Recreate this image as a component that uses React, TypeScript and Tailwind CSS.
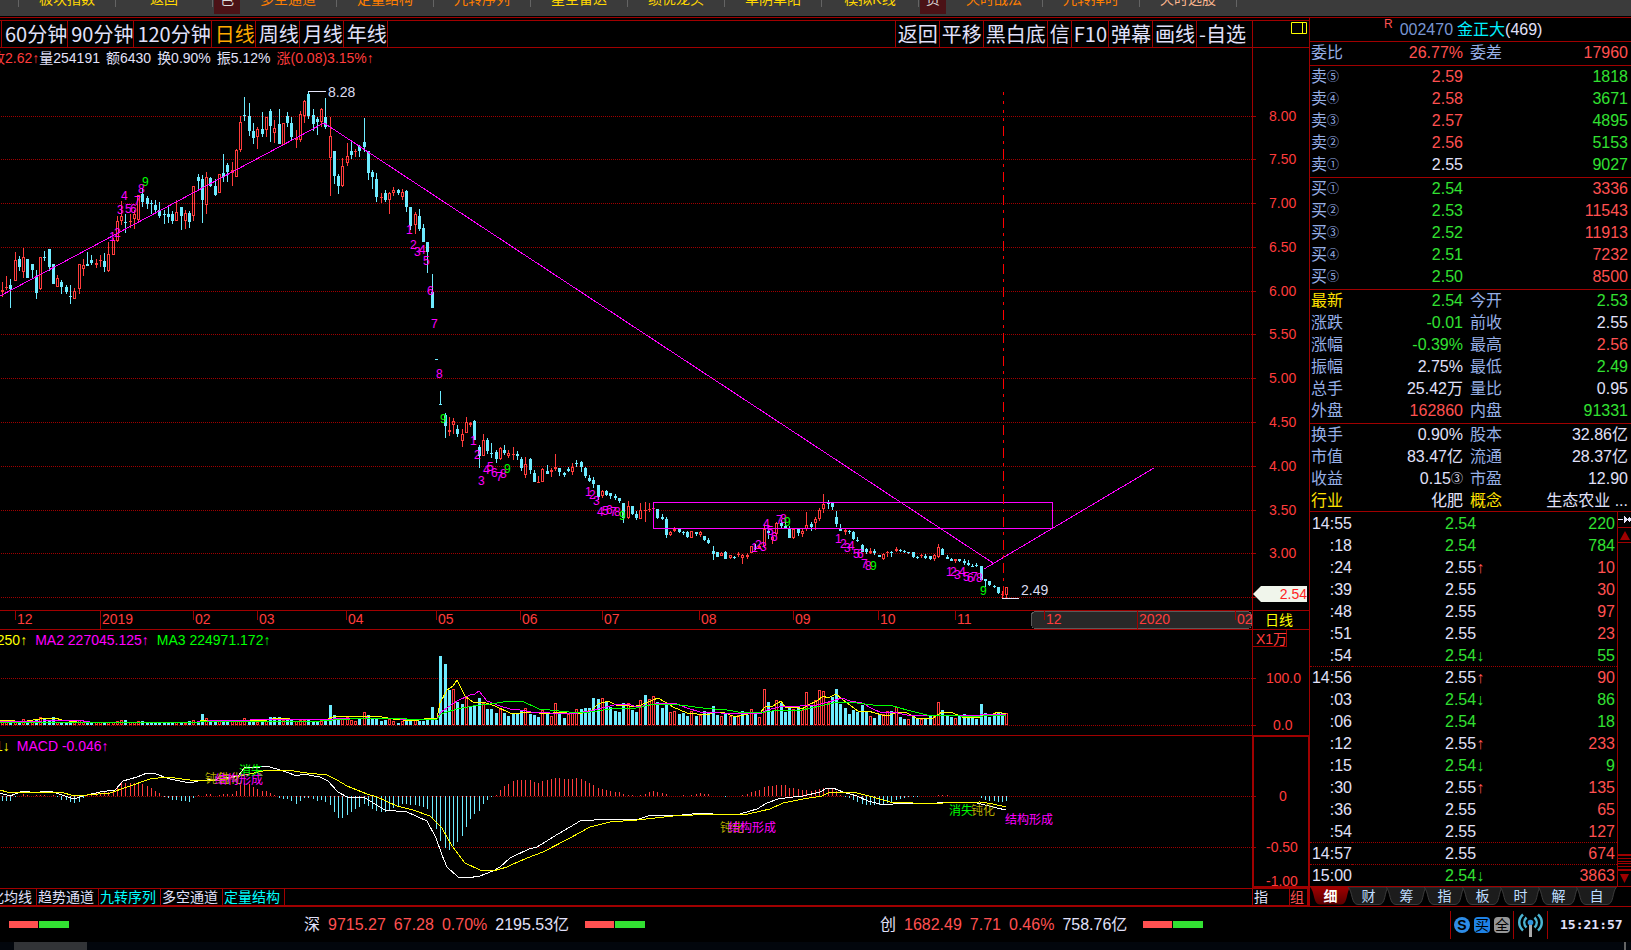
import React from "react";

type Candle = [string, number, number, number, number];
type Pt = [number, number];

const UP = "#ff3c3c";
const DOWN = "#6eebff";
const GRID = "#a00000";

// Daily bars: kind, high, body top, body bottom, low. Values are thirds of a pixel below `base`.
const segments: { base: number; rows: Candle[] }[] = [
  {
    base: 80,
    rows: [
      ["r", 606, 630, 636, 651], ["r", 588, 622, 622, 630], ["c", 597, 615, 627, 684], ["r", 516, 541, 603, 603],
      ["c", 528, 537, 561, 573], ["r", 504, 531, 577, 594], ["c", 537, 537, 594, 594], ["c", 552, 552, 570, 597],
      ["c", 570, 588, 640, 657], ["r", 531, 531, 627, 630], ["c", 513, 531, 534, 543], ["c", 507, 507, 561, 573],
      ["c", 552, 552, 612, 612], ["r", 585, 594, 621, 621], ["c", 600, 606, 621, 642], ["c", 615, 621, 636, 642],
      ["c", 615, 648, 648, 672], ["r", 624, 633, 657, 657], ["r", 552, 552, 627, 642], ["r", 537, 555, 567, 588],
      ["c", 516, 552, 558, 558], ["c", 525, 540, 549, 555], ["r", 537, 549, 557, 564], ["r", 525, 541, 541, 561],
      ["c", 519, 543, 561, 576], ["r", 486, 522, 573, 576], ["r", 474, 480, 527, 527], ["r", 408, 423, 483, 486],
      ["r", 363, 408, 423, 435], ["c", 402, 426, 429, 459], ["r", 402, 424, 424, 444], ["r", 390, 402, 417, 447],
      ["r", 345, 345, 420, 423], ["c", 324, 342, 366, 381], ["c", 348, 354, 372, 387], ["c", 360, 369, 372, 402],
      ["c", 360, 375, 390, 396], ["c", 366, 390, 408, 414], ["c", 390, 402, 405, 432], ["c", 378, 402, 411, 429],
      ["c", 393, 402, 423, 432], ["r", 360, 396, 423, 423], ["c", 381, 381, 408, 450], ["r", 390, 399, 423, 447],
      ["c", 393, 399, 426, 444], ["r", 318, 318, 408, 423], ["c", 282, 291, 303, 330], ["c", 285, 297, 360, 429],
      ["r", 276, 291, 375, 402], ["c", 291, 294, 318, 321], ["c", 297, 318, 345, 348], ["r", 282, 282, 339, 339],
      ["c", 222, 279, 291, 306], ["c", 249, 255, 276, 306], ["r", 246, 270, 279, 318], ["r", 207, 210, 291, 291],
      ["r", 108, 126, 210, 216], ["c", 51, 105, 108, 123], ["c", 69, 108, 153, 168], ["c", 129, 153, 174, 192],
      ["r", 141, 147, 171, 207], ["c", 96, 147, 162, 171], ["r", 111, 111, 150, 171], ["c", 87, 93, 138, 186],
      ["r", 120, 144, 159, 189], ["c", 87, 132, 192, 192], ["r", 129, 129, 195, 195], ["c", 96, 108, 129, 141],
      ["c", 111, 129, 171, 180], ["r", 150, 174, 180, 204], ["r", 93, 102, 180, 186], ["r", 60, 63, 108, 129],
      ["c", 35, 42, 108, 117], ["c", 87, 105, 132, 153], ["c", 111, 117, 126, 165], ["r", 84, 87, 126, 141],
      ["c", 54, 111, 141, 147], ["r", 111, 168, 234, 348], ["c", 213, 213, 288, 312], ["c", 282, 288, 318, 342],
      ["r", 234, 258, 318, 321], ["r", 189, 228, 249, 258], ["c", 180, 213, 225, 237], ["r", 207, 213, 213, 231],
      ["c", 195, 198, 213, 231], ["c", 114, 186, 201, 216], ["c", 213, 213, 279, 300], ["c", 270, 276, 291, 327],
      ["c", 279, 297, 351, 366], ["r", 339, 351, 351, 369], ["c", 330, 339, 360, 366], ["r", 336, 339, 360, 402],
      ["r", 321, 330, 339, 348], ["c", 327, 330, 339, 345], ["r", 327, 336, 351, 360], ["c", 330, 333, 381, 396],
      ["c", 381, 381, 438, 450], ["r", 396, 402, 435, 462], ["c", 387, 408, 447, 453], ["c", 432, 444, 486, 486],
      ["c", 486, 486, 516, 579], ["c", 582, 636, 684, 684],
    ],
  },
  {
    base: 300,
    rows: [
      ["c", 178, 178, 178, 178], ["c", 273, 313, 313, 315], ["c", 339, 345, 378, 414], ["r", 351, 390, 396, 408],
      ["r", 354, 363, 375, 402], ["c", 375, 387, 402, 411], ["r", 387, 402, 423, 441], ["r", 351, 366, 399, 399],
      ["r", 366, 369, 375, 381], ["c", 360, 363, 420, 420], ["c", 435, 441, 468, 504], ["r", 402, 420, 468, 468],
      ["c", 414, 420, 453, 462], ["c", 429, 459, 462, 474], ["c", 450, 456, 477, 489], ["r", 441, 444, 477, 480],
      ["c", 435, 450, 459, 465], ["r", 450, 459, 468, 474], ["r", 441, 462, 465, 480], ["c", 453, 462, 468, 480],
      ["c", 471, 477, 504, 513], ["r", 471, 492, 525, 534], ["c", 474, 477, 510, 522], ["c", 510, 519, 546, 546],
      ["r", 528, 548, 548, 548], ["r", 504, 507, 546, 546], ["c", 495, 513, 522, 522], ["r", 504, 510, 516, 531],
      ["r", 462, 501, 507, 513], ["c", 504, 504, 516, 528], ["c", 516, 519, 525, 531], ["c", 501, 507, 513, 516],
      ["r", 489, 501, 516, 525], ["c", 480, 489, 492, 501], ["c", 483, 486, 501, 516], ["c", 501, 504, 528, 534],
      ["c", 525, 534, 543, 546], ["c", 531, 540, 552, 564], ["c", 555, 555, 591, 600], ["r", 570, 573, 588, 594],
      ["c", 570, 573, 585, 588], ["c", 579, 579, 588, 597], ["c", 582, 588, 594, 600], ["c", 594, 594, 603, 609],
      ["c", 609, 609, 654, 669], ["r", 603, 618, 654, 657], ["c", 618, 618, 642, 645], ["c", 633, 642, 654, 660],
      ["r", 609, 630, 657, 657], ["r", 606, 630, 633, 666], ["r", 609, 627, 630, 636],
    ],
  },
  {
    base: 480,
    rows: [
      ["r", 84, 86, 86, 88], ["c", 87, 87, 114, 117], ["c", 102, 111, 117, 120], ["c", 111, 117, 165, 174],
      ["r", 153, 156, 165, 168], ["r", 141, 147, 153, 156], ["c", 147, 147, 156, 159], ["c", 153, 156, 159, 165],
      ["c", 153, 156, 171, 174], ["r", 153, 153, 174, 174], ["c", 156, 156, 162, 168], ["r", 153, 156, 165, 171],
      ["c", 168, 168, 180, 183], ["c", 174, 180, 189, 192], ["c", 198, 213, 222, 240], ["c", 216, 216, 231, 231],
      ["r", 216, 219, 228, 228], ["c", 213, 216, 237, 237], ["r", 225, 225, 234, 237], ["c", 228, 231, 234, 237],
      ["r", 216, 222, 225, 231], ["r", 222, 225, 234, 252], ["r", 219, 225, 231, 237], ["r", 198, 198, 219, 219],
      ["c", 192, 204, 207, 210], ["r", 192, 198, 204, 207], ["r", 132, 147, 198, 204], ["c", 147, 153, 159, 177],
      ["r", 168, 171, 180, 192], ["r", 126, 129, 162, 168], ["c", 120, 129, 138, 144], ["c", 126, 138, 144, 147],
      ["c", 138, 147, 174, 174], ["r", 147, 147, 174, 177], ["c", 147, 147, 159, 168], ["r", 147, 153, 162, 171],
      ["r", 96, 135, 147, 153], ["c", 126, 132, 141, 153], ["r", 111, 117, 129, 150], ["r", 84, 90, 117, 123],
      ["r", 42, 72, 87, 99], ["c", 60, 69, 72, 87], ["c", 66, 69, 81, 90], ["c", 93, 111, 132, 141],
      ["c", 132, 144, 153, 153], ["r", 147, 150, 156, 165], ["c", 150, 153, 156, 162], ["c", 153, 156, 177, 180],
      ["c", 171, 180, 183, 186], ["c", 192, 195, 216, 216], ["c", 204, 207, 216, 222], ["r", 204, 213, 219, 222],
      ["c", 207, 213, 219, 225], ["c", 225, 225, 231, 231], ["r", 219, 222, 237, 240], ["r", 213, 216, 219, 231],
      ["c", 213, 216, 219, 231], ["r", 201, 207, 213, 216], ["c", 207, 210, 213, 216], ["c", 210, 213, 216, 219],
      ["c", 216, 216, 219, 222], ["c", 216, 216, 231, 234], ["c", 228, 231, 234, 237], ["r", 222, 225, 228, 234],
      ["c", 222, 228, 234, 237], ["c", 228, 228, 237, 240], ["r", 222, 225, 237, 243], ["r", 192, 201, 231, 234],
      ["c", 204, 207, 225, 225], ["c", 225, 231, 237, 237], ["c", 234, 237, 243, 243], ["r", 237, 237, 243, 249],
      ["c", 237, 237, 243, 246], ["c", 237, 243, 249, 255], ["c", 240, 249, 255, 258], ["c", 252, 258, 261, 261],
      ["c", 249, 255, 258, 261], ["c", 258, 258, 300, 300], ["c", 297, 297, 303, 321], ["c", 303, 303, 315, 318],
      ["c", 315, 318, 321, 324], ["c", 321, 321, 339, 342], ["r", 333, 342, 345, 354], ["r", 321, 321, 345, 354],
    ],
  },
];

const candles = segments.flatMap((s) =>
  s.rows.map(([k, ...v]) => ({ k, v: v.map((n) => s.base + Math.floor(n / 3)) })),
);

const barX = (i: number) => Math.floor(2.4 + 4.2558 * i);

// Volume bar heights; negative marks a rising day.
const volume = [
  -3, -3, 2, -3, 3, -6, 4, -3, 6, -8, 6, 4, 8, -3, 3, 2, 2, -4, -5, -3, 3, 3, -3, -3, 3, -3, -3, -4, -5, 5, -3, -3,
  -4, 4, 3, 3, 3, 3, 2, 2, 2, -3, 2, -2, 4, -5, 4, 11, -7, 4, 4, -4, 5, 4, -4, -5, -5, -7, 4, 4, -3, 6, -4, 8, 8, 8,
  -5, 5, 5, -4, -5, -5, 5, 4, 3, -4, 4, 20, 10, 6, -7, -8, -5, -4, 6, -13, 10, 7, 7, 4, 5, -6, -4, 2, -4, 6, 4, -5,
  4, 4, 5, 18, 5, 69, 61, 35, -36, 23, 21, -27, 19, 20, 27, -22, 16, 16, 12, -16, 12, 9, 12, 12, 14, -17, 11, 10, 8,
  -15, 13, -9, -22, 11, 7, -11, -12, -16, 16, 17, 17, 27, 26, -27, 24, 18, 14, 13, 22, -22, 15, 13, -25, 30, -26,
  -29, 23, 17, 20, -13, -14, 11, 12, 9, -14, 9, -10, 14, 12, 19, 10, -9, 12, -9, 9, -10, 14, 10, -16, 12, -8, -36,
  23, 14, -25, 22, 13, 19, -16, 18, -15, -33, 19, -25, -35, -34, -23, 28, 36, 21, 17, 11, 15, 13, 20, 13, -9, 7, 10,
  -11, -14, 14, -18, 8, 6, -6, 9, 7, -6, 6, 9, -10, -23, 15, 9, 8, -7, 9, 11, 8, 7, 6, 21, 12, 8, 10, 13, 12, -12,
];

const macd = [
  -5, -5, -5, -1, 0, 2, 1, 0, 1, 1, 1, 0, 1, -1, -4, -4, -6, -7, -6, -2, 1, 2, 3, 3, 4, 4, 6, 9, 14, 13, 13, 13, 14,
  12, 10, 8, 5, 3, -1, -2, -4, -4, -5, -5, -6, -2, 1, 0, 2, 2, 0, 1, 2, 2, 2, 5, 11, 13, 12, 9, 7, 5, 5, 3, 1, -2,
  -3, -3, -5, -8, -5, -2, -2, -3, -5, -4, -6, -9, -16, -22, -22, -19, -16, -13, -11, -8, -10, -13, -15, -16, -16,
  -14, -12, -10, -8, -8, -9, -9, -10, -11, -13, -22, -33, -45, -52, -54, -50, -46, -40, -31, -23, -18, -15, -8, -4,
  -1, 1, 6, 10, 12, 15, 16, 16, 16, 16, 14, 13, 15, 16, 17, 18, 18, 17, 17, 17, 18, 17, 15, 13, 11, 8, 7, 6, 5, 4,
  4, 2, 1, 1, 0, 1, 2, 4, 5, 4, 3, 2, 0, 0, 0, 1, 0, 1, 2, 3, 2, 2, 0, 0, 0, -1, 0, 0, 0, 1, 2, 4, 5, 6, 9, 10, 10,
  11, 11, 11, 8, 8, 7, 6, 6, 5, 6, 7, 8, 8, 8, 5, 1, -1, -2, -4, -6, -8, -9, -9, -9, -9, -8, -7, -6, -4, -3, -2, -1,
  -1, -1, 0, 0, 0, 0, 1, 1, 1, 0, 0, 0, 0, 0, 0, 0, -2, -4, -5, -5, -6, -6, -5,
];

const plot = (x0: number, y0: number, kx: number, pts: Pt[]) =>
  pts.map(([x, y]) => `${Math.round(x0 + x / kx)},${Math.round(y0 + y / 3)}`).join(" ") + " ";

const ma1 =
  plot(0, 600, 3, [[0, 364], [30, 361], [60, 366], [120, 357], [165, 355], [185, 361], [230, 367], [300, 367], [590, 366], [610, 360], [680, 359], [800, 361], [830, 355], [870, 356], [940, 360], [985, 358], [1000, 350], [1040, 347], [1080, 352], [1130, 349], [1180, 358], [1240, 364], [1290, 355], [1310, 353], [1321, 310], [1340, 270], [1358, 258], [1372, 241], [1395, 288], [1423, 309], [1450, 307], [1486, 318], [1530, 338], [1560, 338]]) +
  plot(420, 630, 2.529, [[265, 246], [300, 249], [330, 253], [345, 247], [400, 253], [435, 239], [450, 222], [475, 213], [495, 224], [520, 226], [535, 232], [560, 226], [602, 205]]) +
  plot(660, 640, 3, [[0, 178], [40, 200], [80, 220], [110, 223], [150, 222], [160, 217], [190, 217], [225, 230], [265, 222], [300, 218], [315, 200], [340, 198], [362, 184], [375, 200], [392, 204], [405, 200], [425, 208], [445, 195], [470, 182], [490, 169], [505, 174], [527, 162], [550, 180], [595, 212], [625, 212], [665, 226], [690, 224], [710, 215], [740, 220], [775, 236], [820, 235], [845, 217], [880, 218], [905, 230], [950, 233], [975, 224], [1000, 222], [1015, 216], [1037, 223]]);
const ma2 =
  plot(0, 600, 3, [[0, 365], [130, 364], [160, 360], [230, 361], [270, 367], [400, 367], [590, 366], [650, 361], [750, 361], [820, 357], [930, 358], [1000, 357], [1100, 355], [1200, 357], [1260, 361], [1310, 357], [1322, 335], [1370, 302], [1410, 284], [1425, 283], [1436, 273], [1462, 303], [1500, 318], [1530, 328], [1560, 329]]) +
  plot(420, 630, 2.529, [[280, 247], [330, 250], [400, 250], [440, 240], [490, 225], [525, 222], [550, 230], [595, 223]]) +
  plot(660, 640, 3, [[0, 190], [50, 193], [80, 203], [120, 217], [180, 220], [300, 221], [320, 210], [370, 199], [420, 197], [470, 195], [505, 186], [545, 174], [570, 182], [605, 190], [640, 208], [665, 218], [700, 217], [740, 225], [800, 226], [825, 229], [860, 225], [960, 225], [1037, 223]]);
const ma3 =
  plot(0, 600, 3, [[0, 367], [600, 367], [620, 364], [960, 362], [1000, 359], [1100, 354], [1200, 355], [1240, 360], [1310, 358], [1322, 342], [1370, 327], [1420, 317], [1470, 313], [1530, 304], [1560, 307]]) +
  plot(420, 630, 2.529, [[258, 214], [300, 237], [330, 240], [400, 249], [430, 245], [480, 236], [545, 235], [595, 223]]) +
  plot(660, 640, 3, [[0, 192], [60, 196], [130, 203], [200, 209], [235, 217], [290, 219], [360, 211], [425, 210], [480, 199], [530, 186], [590, 189], [640, 196], [700, 198], [740, 210], [800, 224], [900, 227], [970, 229], [1037, 224]]);
const dif =
  plot(0, 600, 3, [[0, 580], [30, 587], [70, 574], [110, 580], [130, 574], [150, 574], [185, 586], [222, 598], [250, 587], [300, 577], [345, 571], [370, 543], [410, 531], [440, 519], [460, 520], [510, 536], [570, 549], [595, 542], [650, 538], [715, 528], [735, 502], [780, 502], [800, 499], [850, 512], [890, 527], [910, 521], [960, 530], [985, 543], [1015, 577], [1040, 590], [1095, 593], [1155, 629], [1220, 636], [1280, 662], [1308, 715], [1325, 765], [1340, 802], [1375, 832], [1400, 834], [1440, 828], [1480, 812], [1500, 800], [1530, 773]]) +
  plot(420, 630, 2.529, [[232, 682], [275, 657], [295, 650], [350, 611], [380, 592], [405, 572], [440, 569], [510, 566], [545, 569], [585, 556], [640, 558], [710, 549], [770, 554], [802, 551]]) +
  plot(660, 640, 3, [[240, 521], [290, 508], [320, 490], [355, 477], [400, 470], [430, 468], [480, 456], [500, 445], [520, 445], [550, 457], [590, 469], [625, 484], [660, 492], [700, 492], [830, 490], [845, 485], [870, 487], [950, 488], [975, 495], [1010, 504], [1037, 509]]);
const dea =
  plot(0, 600, 3, [[0, 571], [20, 577], [180, 577], [225, 587], [330, 579], [390, 558], [450, 537], [500, 531], [570, 541], [660, 540], [735, 524], [800, 510], [860, 510], [920, 519], [980, 525], [1010, 540], [1040, 559], [1100, 582], [1130, 590], [1190, 617], [1240, 630], [1290, 648], [1325, 685], [1355, 738], [1395, 788], [1440, 809], [1480, 812], [1520, 800]]) +
  plot(420, 630, 2.529, [[230, 706], [270, 683], [310, 667], [380, 625], [430, 592], [480, 576], [550, 570], [640, 559], [740, 553], [800, 551]]) +
  plot(660, 640, 3, [[265, 521], [330, 507], [370, 490], [430, 477], [485, 467], [510, 457], [550, 455], [590, 460], [640, 472], [690, 486], [760, 490], [850, 488], [960, 487], [1000, 491], [1037, 500]]);

// Sequence counters 1 to 9: the place of each digit.
const runs: Pt[][] = [
  [[109, 236], [114, 232], [117, 209], [121, 195], [125, 208], [130, 208], [134, 200], [138, 188], [142, 181]],
  [[406, 229], [410, 244], [414, 251], [419, 249], [423, 260], [427, 290], [431, 323], [436, 373], [440, 418]],
  [[470, 440], [474, 454], [478, 480], [483, 469], [487, 466], [491, 472], [496, 476], [500, 473], [504, 468]],
  [[585, 491], [589, 494], [593, 500], [597, 511], [602, 510], [606, 509], [610, 511], [614, 511], [619, 515]],
  [[751, 547], [755, 544], [760, 546], [763, 523], [767, 530], [771, 536], [776, 519], [780, 518], [784, 521]],
  [[835, 538], [840, 543], [844, 547], [848, 545], [853, 553], [857, 553], [861, 563], [865, 565], [870, 565]],
  [[946, 571], [950, 571], [954, 574], [959, 571], [963, 576], [967, 577], [971, 576], [976, 577], [980, 590]],
];

const priceGrid: [number, string][] = [
  [116, "8.00"], [159, "7.50"], [203, "7.00"], [247, "6.50"], [291, "6.00"], [334, "5.50"],
  [378, "5.00"], [422, "4.50"], [466, "4.00"], [510, "3.50"], [553, "3.00"], [597, ""],
];

const months: [number, string, boolean][] = [
  [15, "12", false], [100, "2019", true], [193, "02", false], [257, "03", false], [346, "04", false],
  [436, "05", false], [520, "06", false], [602, "07", false], [699, "08", false], [793, "09", false],
  [878, "10", false], [955, "11", false], [1044, "12", false], [1137, "2020", true], [1235, "02", false],
];

const Dots = ({ y }: { y: number }) => (
  <line x1="1" x2="100%" y1={y + 0.5} y2={y + 0.5} stroke={GRID} strokeDasharray="1 1" />
);

function PriceChart() {
  return (
    <svg className="block h-[542px] w-full" shapeRendering="crispEdges" role="img" aria-label="日线K线图">
      <g transform="translate(0 -68)">
        {priceGrid.map(([y]) => <Dots key={y} y={y} />)}
        {candles.map(({ k, v: [h, t, b, l] }, i) => {
          const x = barX(i);
          const body = Math.max(1, b - t);
          return k === "c" ? (
            <g key={i} fill={DOWN}>
              <rect x={x} y={h} width="1" height={Math.max(1, l - h)} />
              <rect x={x - 1} y={t} width="3" height={body} />
            </g>
          ) : (
            <g key={i} fill={UP}>
              <rect x={x} y={h} width="1" height={t - h} />
              <rect x={x} y={b} width="1" height={Math.max(0, l - b)} />
              {body < 3 ? (
                <rect x={x - 1} y={t} width="3" height={body} />
              ) : (
                <rect x={x - 0.5} y={t + 0.5} width="2" height={body - 1} fill="none" stroke={UP} />
              )}
            </g>
          );
        })}
        <g fill="none" stroke="#ff00ff">
          <polyline points="0,296 324,123 993,563" />
          <line x1="984" y1="569" x2="1154" y2="468" />
          <rect x="653.5" y="502.5" width="399" height="26" />
        </g>
        <path d="M1003.5 92v3M1003.5 101v3" stroke="#ff0000" />
        <line x1="1003.5" x2="1003.5" y1="110" y2="598" stroke="#ff0000" strokeDasharray="10 5 3 5" strokeDashoffset="7" />
        <path d="M308 91.5h18M1002 598.5h17" stroke="#e6e6fa" />
        <g className="text-sm" fill="#dcdcf0">
          <text x="328" y="97">8.28</text>
          <text x="1021" y="595">2.49</text>
        </g>
        <g className="text-xs">
          {runs.map((r, i) =>
            r.map(([x, y], j) => (
              <text key={`${i}-${j}`} x={x} y={y + 5} fill={j === 8 ? "#00ff00" : "#ff00ff"}>{j + 1}</text>
            )),
          )}
        </g>
      </g>
    </svg>
  );
}

function VolumeChart() {
  return (
    <svg className="block h-[85px] w-full" shapeRendering="crispEdges" role="img" aria-label="成交量">
      <g transform="translate(0 -650)">
        <Dots y={678} />
        <Dots y={725} />
        {volume.map((v, i) =>
          v >= 0 ? (
            <rect key={i} x={barX(i) - 1} y={725 - v} width="3" height={v} fill={DOWN} />
          ) : (
            <rect key={i} x={barX(i) - 0.5} y={725.5 + v} width="2" height={-v - 1} fill="none" stroke={UP} />
          ),
        )}
        <polyline points={ma1} fill="none" stroke="#ffff00" />
        <polyline points={ma2} fill="none" stroke="#ff00ff" />
        <polyline points={ma3} fill="none" stroke="#00ff00" />
      </g>
    </svg>
  );
}

function MacdChart() {
  return (
    <svg className="block h-[132px] w-full" shapeRendering="crispEdges" role="img" aria-label="MACD">
      <g transform="translate(0 -756)">
        <Dots y={796} />
        <Dots y={847} />
        {macd.map((v, i) => (
          <rect key={i} x={barX(i)} y={v > 0 ? 796 - v : 796} width="1" height={Math.abs(v)} fill={v > 0 ? UP : DOWN} />
        ))}
        <polyline points={dif} fill="none" stroke="#ffffff" />
        <polyline points={dea} fill="none" stroke="#ffff00" />
        <g className="text-xs" fill="#b4aa00">
          <text x="205" y="783">钝化</text>
          <text x="218" y="783">钝化</text>
          <text x="215" y="784" fill="#ff00ff">结构形成</text>
          <text x="239" y="775" fill="#00ff00">消失</text>
          <text x="720" y="832">钝化</text>
          <text x="728" y="832" fill="#ff00ff">结构形成</text>
          <text x="949" y="815" fill="#00ff00">消失</text>
          <text x="971" y="815">钝化</text>
          <text x="1005" y="824" fill="#ff00ff">结构形成</text>
        </g>
      </g>
    </svg>
  );
}

const topMenu: { t: string; c?: string; box?: boolean }[] = [
  { t: "板块指数", c: "text-[#ffd800]" }, { t: "返回", c: "text-[#ffd800]" }, { t: "色", box: true },
  { t: "多空通道", c: "text-[#ff7f00]" }, { t: "定量结构", c: "text-[#ff7f00]" }, { t: "九转序列", c: "text-[#ff7f00]" },
  { t: "星空雷达", c: "text-[#ffd800]" }, { t: "绩优龙头", c: "text-[#ffd800]" }, { t: "单阴单阳", c: "text-[#ffd800]" },
  { t: "模拟K线", c: "text-[#ffd800]" }, { t: "资", box: true }, { t: "天时战法", c: "text-[#ff7f00]" },
  { t: "九转择时", c: "text-[#ff7f00]" }, { t: "天时选股", c: "text-[#ffb890]" },
];

const periods = ["60分钟", "90分钟", "120分钟", "日线", "周线", "月线", "年线"];
const tools = ["返回", "平移", "黑白底", "信", "F10", "弹幕", "画线", "-自选"];

const red = "text-[#ff5050]";
const green = "text-[#32e132]";
const white = "text-[#e1e1fa]";
const label = "text-[#96afe6]";
const yellow = "text-[#ffe100]";

const sells: string[][] = [
  ["⑤", "2.59", "1818", red], ["④", "2.58", "3671", red], ["③", "2.57", "4895", red],
  ["②", "2.56", "5153", red], ["①", "2.55", "9027", white],
];
const buys: string[][] = [
  ["①", "2.54", "3336", green], ["②", "2.53", "11543", green], ["③", "2.52", "11913", green],
  ["④", "2.51", "7232", green], ["⑤", "2.50", "8500", green],
];
const quoteA: string[][] = [
  ["最新", "2.54", green, "今开", "2.53", green], ["涨跌", "-0.01", green, "前收", "2.55", white],
  ["涨幅", "-0.39%", green, "最高", "2.56", red], ["振幅", "2.75%", white, "最低", "2.49", green],
  ["总手", "25.42万", white, "量比", "0.95", white], ["外盘", "162860", red, "内盘", "91331", green],
];
const quoteB: string[][] = [
  ["换手", "0.90%", white, "股本", "32.86亿", white], ["市值", "83.47亿", white, "流通", "28.37亿", white],
  ["收益", "0.15", white, "市盈", "12.90", white], ["行业", "化肥", white, "概念", "生态农业 ...", white],
];
const ticks: [string, string, string, string, string][] = [
  ["14:55", "2.54", "", "220", "g"], [":18", "2.54", "", "784", "g"], [":24", "2.55", "↑", "10", "r"],
  [":39", "2.55", "", "30", "r"], [":48", "2.55", "", "97", "r"], [":51", "2.55", "", "23", "r"],
  [":54", "2.54", "↓", "55", "g"], ["14:56", "2.55", "↑", "90", "r"], [":03", "2.54", "↓", "86", "g"],
  [":06", "2.54", "", "18", "g"], [":12", "2.55", "↑", "233", "r"], [":15", "2.54", "↓", "9", "g"],
  [":30", "2.55", "↑", "135", "r"], [":36", "2.55", "", "65", "r"], [":54", "2.55", "", "127", "r"],
  ["14:57", "2.55", "", "674", "r"], ["15:00", "2.54", "↓", "3863", "r"],
];

function Book({ side, rows, volClass }: { side: string; rows: string[][]; volClass: string }) {
  return (
    <section className="border-t border-[#a00000] pb-px">
      <table className="w-full table-fixed">
        <tbody>
          {rows.map(([n, p, v, c]) => (
            <tr key={n} className="h-[22px]">
              <th scope="row" className={`w-[68px] p-0 pl-px text-left font-normal ${label}`}>
                <span className="flex items-center">{side}<span className="text-xs leading-[22px]">{n}</span></span>
              </th>
              <td className={`w-[85px] p-0 text-right ${c}`}>{p}</td>
              <td className={`p-0 pr-[3px] text-right ${volClass}`}>{v}</td>
            </tr>
          ))}
        </tbody>
      </table>
    </section>
  );
}

function Quote({ rows, className }: { rows: string[][]; className: string }) {
  return (
    <section className={`border-t border-[#a00000] ${className}`}>
      <table className="w-full table-fixed">
        <tbody>
          {rows.map(([a, av, ac, b, bv, bc]) => (
            <tr key={a} className="h-[22px]">
              <th scope="row" className={`w-[68px] p-0 pl-px text-left font-normal ${a === "最新" || a === "行业" ? yellow : label}`}>{a}</th>
              <td className={`w-[85px] p-0 text-right ${ac}`}>
                <span className="flex items-center justify-end">{av}{a === "收益" && <span className="text-xs leading-[22px]">③</span>}</span>
              </td>
              <th scope="row" className={`w-[48px] p-0 pl-[7px] text-left font-normal whitespace-nowrap ${b === "概念" ? yellow : label}`}>{b}</th>
              <td className={`p-0 pr-[3px] text-right whitespace-nowrap ${bc}`}>{bv}</td>
            </tr>
          ))}
        </tbody>
      </table>
    </section>
  );
}

function SidePanel() {
  return (
    <aside className="flex flex-col border-t border-l border-[#a00000] text-base leading-[22px]">
      <h1 className="flex h-[23px] items-center pl-[74px] font-normal">
        <span className={`mr-[7px] -mt-3 text-xs ${red}`}>R</span>
        <span className="text-[#7896d2]">002470</span>
        <span className="ml-1 text-[#00f0ff]">金正大</span>
        <span className={white}>(469)</span>
      </h1>
      <Quote className="h-6" rows={[["委比", "26.77%", red, "委差", "17960", red]]} />
      <Book side="卖" rows={sells} volClass={green} />
      <Book side="买" rows={buys} volClass={red} />
      <Quote className="pb-px" rows={quoteA} />
      <Quote className="h-[88px]" rows={quoteB} />
      <section className="flex border-t border-[#a00000]">
        <table className="flex-1 table-fixed border-separate border-spacing-0">
          <tbody>
            {ticks.map(([t, p, a, v, c], i) => {
              const line = i > 0 && t.length > 3 ? "border-[#a00000]" : "border-transparent";
              return (
                <tr key={i}>
                  <td className={`h-[22px] w-[42px] border-t border-dotted p-0 text-right leading-[21px] ${line} ${white}`}>{t}</td>
                  <td className={`h-[22px] border-t border-dotted p-0 pl-[93px] leading-[21px] ${line} ${p === "2.54" ? green : white}`}>
                    {p}<span className={a === "↑" ? red : green}>{a}</span>
                  </td>
                  <td className={`h-[22px] border-t border-dotted p-0 pr-[2px] text-right leading-[21px] ${line} ${c === "g" ? green : red}`}>{v}</td>
                </tr>
              );
            })}
          </tbody>
        </table>
        <div className="flex w-[14px] flex-col items-center border-l border-[#a00000]">
          <button aria-label="固定" className="flex h-[15px] w-full items-center justify-center">
            <svg width="13" height="9" viewBox="0 0 13 9" shapeRendering="crispEdges">
              <path d="M0 4h5v1H0zM6 1h1v7H6zM7 2h1v5H7zM8 3h1v3H8zM9 4h1v1H9zM10 3h1v3h-1zM11 2h1v5h-1zM12 3h1v3h-1z" fill="#e6e6fa" />
            </svg>
          </button>
          <button aria-label="向上滚动" className="flex h-4 w-full items-center justify-center border-y border-[#a00000]">
            <svg width="10" height="9" viewBox="0 0 10 9"><path d="M5 0l5 9H0z" fill="#a00000" /></svg>
          </button>
          <div className="mt-auto flex h-[17px] w-full flex-col justify-between border-b border-[#a00000]">
            <i className="h-0.5 bg-[#a00000]" /><i className="h-px bg-[#a00000]" /><i className="h-px bg-[#a00000]" />
            <i className="h-px bg-[#a00000]" /><i className="h-px bg-[#a00000]" /><i className="h-px bg-[#a00000]" />
          </div>
          <button aria-label="向下滚动" className="flex h-[15px] w-full items-center justify-center">
            <svg width="9" height="9" viewBox="0 0 9 9"><path d="M0 0h9L4.500 9z" fill="#a00000" /></svg>
          </button>
        </div>
      </section>
      <nav className="flex flex-1 border-t border-b border-[#a00000] text-sm leading-[18px]">
        {["细", "财", "筹", "指", "板", "时", "解", "自"].map((t, i) => (
          <button key={t} className={`relative h-[18px] w-[38px] pl-[3px] ${i === 0 ? "font-bold text-white" : "text-[#bedcff]"}`}>
            <svg className="absolute top-0 left-0" width="41" height="18" viewBox="0 0 41 18">
              <defs>
                <linearGradient id="tabOn" x1="0" y1="0" x2="0" y2="1">
                  <stop offset="0" stopColor="#a00000" /><stop offset="1" stopColor="#5a0000" />
                </linearGradient>
              </defs>
              <path d="M0 0C5 5 3 17.500 10 17.500H31C38 17.500 36 5 40.500 0z" fill={i === 0 ? "url(#tabOn)" : "#1c1c1c"} stroke={i === 0 ? "none" : "#3c3c3c"} />
            </svg>
            <span className="relative">{t}</span>
          </button>
        ))}
      </nav>
    </aside>
  );
}

const Bars = () => (
  <div className="flex gap-px"><i className="h-[7px] w-[29px] bg-[#ff5050]" /><i className="h-[7px] w-[30px] bg-[#32e132]" /></div>
);

export default function App() {
  return (
    <div className="min-h-screen overflow-hidden bg-black font-['Liberation_Sans','Noto_Sans_CJK_SC',sans-serif] text-white">
      <header className="h-4 overflow-hidden bg-[#3b3b3b]">
        <nav className="-mt-[9px] flex text-sm leading-4">
          <span className="h-4 w-[19px] border-r border-[#646464]" />
          {topMenu.map((m) =>
            m.box ? (
              <button key={m.t} className="ml-px flex h-[23px] w-[26px] justify-center bg-[#4b1216] text-[#dcdcdc]">{m.t}</button>
            ) : (
              <button key={m.t} className={`h-4 w-[97px] border-r border-[#646464] ${m.c}`}>{m.t}</button>
            ),
          )}
        </nav>
      </header>

      <main className="mt-px grid grid-cols-[minmax(0,1fr)_322px]">
        <div className="min-w-0 border-t border-[#a00000] pt-0.5">
          <div className="grid h-7 grid-cols-[minmax(0,1fr)_57px] border-y border-[#a00000]">
            <div className="flex justify-between overflow-hidden font-['Noto_Sans_CJK_SC',sans-serif] text-xl leading-[26px] whitespace-nowrap text-[#e1e1fa]">
              <nav className="ml-px flex">
                {periods.map((p) => (
                  <button key={p} className={`border-l border-[#a00000] pl-[3px] ${p === "日线" ? "text-[#ffaa00]" : ""}`}>{p}</button>
                ))}
                <span className="border-l border-[#a00000]" />
              </nav>
              <nav className="flex">
                {tools.map((p) => (
                  <button key={p} className={`border-l border-[#a00000] pl-0.5 ${p === "-自选" ? "pr-1.5" : "pr-px"}`}>{p}</button>
                ))}
              </nav>
            </div>
            <div className="flex justify-end border-l border-[#a00000] pt-px pr-0.5">
              <button aria-label="侧栏" className="h-3 w-4">
                <svg width="16" height="12" viewBox="0 0 16 12" fill="none" stroke="#ffff00"><path d="M.5 .5h15v11H.5zM11.500 1v10" /></svg>
              </button>
            </div>
          </div>

          <div className="grid grid-cols-[minmax(0,1fr)_57px]">
            <div className="overflow-hidden">
              <div className="-ml-[9px] flex h-[19px] items-center gap-1.5 text-sm whitespace-nowrap text-[#e1e1fa]">
                <span><span className="text-[#ff3c3c]">收2.62↑</span>量254191</span>
                <span>额6430</span><span>换0.90%</span><span>振5.12%</span>
                <span className="text-[#ff3c3c]">涨(0.08)3.15%↑</span>
              </div>
              <div className="pt-px"><PriceChart /></div>
            </div>
            <svg className="block h-[562px] w-full border-l border-[#a00000] text-sm" aria-label="价格轴">
              <g transform="translate(0 -48)" fill={UP}>
                {priceGrid.map(([y, t]) => (
                  <g key={y}><rect y={y} width="3" height="1" fill={GRID} /><text x="16" y={y + 5}>{t}</text></g>
                ))}
                <path d="M0 594l8-8h46v16H8z" fill="#f0f5eb" />
                <text x="54" y="599" textAnchor="end" fill="#ff1e1e">2.54</text>
              </g>
            </svg>
          </div>

          <div className="grid h-[19px] grid-cols-[minmax(0,1fr)_57px] border-t border-[#a00000] text-sm">
            <svg className="block h-[18px] w-full" shapeRendering="crispEdges" aria-label="时间轴">
              <rect x="1031.500" y="0.500" width="220" height="17" rx="4" fill="#282828" stroke="#5a5a5a" />
              {months.map(([x, t, tall]) => (
                <g key={x}>
                  <rect x={x} y="0" width="1" height={tall ? 18 : 9} fill={GRID} />
                  <text x={x + 2} y="13" fill={UP}>{t}</text>
                </g>
              ))}
            </svg>
            <div className="border-l border-[#a00000] pr-1 text-center leading-[18px] text-[#ffff00]">日线</div>
          </div>

          <div className="grid h-[106px] grid-cols-[minmax(0,1fr)_57px] border-t border-[#a00000] text-sm">
            <div className="overflow-hidden">
              <div className="-ml-[11px] flex h-[19px] items-center gap-2 whitespace-nowrap">
                <span className="text-[#ffff00]">1250↑</span>
                <span className="text-[#ff00ff]">MA2 227045.125↑</span>
                <span className="text-[#00ff00]">MA3 224971.172↑</span>
              </div>
              <div className="pt-px"><VolumeChart /></div>
            </div>
            <svg className="block h-[105px] w-full border-l border-[#a00000]" aria-label="成交量轴">
              <rect x="-1" y="-1" width="34.500" height="17.500" fill="none" stroke={GRID} />
              <rect y="48" width="3" height="1" fill={GRID} />
              <rect y="95" width="3" height="1" fill={GRID} />
              <g fill={UP}><text x="3" y="14">X1万</text><text x="13" y="53">100.0</text><text x="20" y="100">0.0</text></g>
            </svg>
          </div>

          <div className="grid h-[153px] grid-cols-[minmax(0,1fr)_57px] text-sm">
            <div className="overflow-hidden border-t border-[#a00000]">
              <div className="-ml-[5px] flex h-5 items-center gap-[7px] whitespace-nowrap">
                <span className="text-[#ffff00]">1↓</span>
                <span className="text-[#ff00ff]">MACD -0.046↑</span>
              </div>
              <MacdChart />
            </div>
            <svg className="block h-[153px] w-full border-2 border-r border-[#a00000]" aria-label="MACD轴">
              <rect y="59" width="2" height="1" fill={GRID} />
              <rect y="110" width="2" height="1" fill={GRID} />
              <g fill={UP}><text x="25" y="64">0</text><text x="12" y="115">-0.50</text><text x="12" y="149">-1.00</text></g>
            </svg>
          </div>

          <div className="flex h-[19px] justify-between overflow-hidden border-t border-b-2 border-[#a00000] text-sm leading-4 whitespace-nowrap">
            <nav className="-ml-2.5 flex text-[#e1e1fa]">
              <button className="w-[46px] text-left">化均线</button>
              <button className="border-l border-[#a00000] pr-1 pl-px">趋势通道</button>
              <button className="border-l border-[#a00000] pr-1 pl-px text-[#00ffff]">九转序列</button>
              <button className="border-l border-[#a00000] pr-1 pl-px">多空通道</button>
              <button className="border-x border-[#a00000] pr-1 pl-px text-[#00ffff]">定量结构</button>
            </nav>
            <div className="flex w-[57px] justify-between border-l border-[#a00000]">
              <button className="pl-px text-[#e1e1fa]">指</button>
              <button className="border-r-2 border-l border-[#a00000] pr-[3px] text-[#ff5050]">组</button>
            </div>
          </div>
        </div>
        <SidePanel />
      </main>

      <footer>
        <div className="grid h-[35px] grid-cols-[304px_576px_minmax(0,1fr)_auto] items-center whitespace-nowrap text-[#ff5050]">
          <div className="pl-[9px]"><Bars /></div>
          <div className="flex items-center gap-2">
            <span className={white}>深</span><span>9715.27</span><span>67.28</span><span>0.70%</span>
            <span className={white}>2195.53亿</span><div className="pl-2"><Bars /></div>
          </div>
          <div className="flex items-center gap-2">
            <span className={white}>创</span><span>1682.49</span><span>7.71</span><span>0.46%</span>
            <span className={white}>758.76亿</span><div className="pl-2"><Bars /></div>
          </div>
          <div className="flex h-7 items-center">
            <div className="flex h-full items-center gap-1 border-l border-[#a00000] px-[3px] text-sm leading-4 text-black">
              <button className="size-4 rounded-full bg-[#2d8ce6] font-bold">S</button>
              <button className="flex size-4 items-center justify-center rounded-sm bg-[#1e82e6]">买</button>
              <button className="flex size-4 items-center justify-center rounded-sm bg-[#969696]">全</button>
            </div>
            <div className="flex h-full items-center border-x border-[#a00000] px-1">
              <svg width="25" height="24" viewBox="0 0 25 24" fill="none" stroke="#4bb4d2" strokeWidth="2.500" aria-label="信号">
                <path d="M5 1.500C0 6 0 13 5 17.500M20 1.500c5 4.500 5 11.500 0 16" />
                <path d="M8.500 4.500C5.500 7.500 5.500 11.500 8.500 14.500M16.500 4.500c3 3 3 7 0 10" />
                <circle cx="12.500" cy="9.500" r="2.800" fill="#3296dc" stroke="none" />
                <path d="M12.500 12v12" stroke="#aaaaaa" strokeWidth="3" />
              </svg>
            </div>
            <time className="w-[83px] pl-3 font-['DejaVu_Sans_Mono',monospace] text-[13px] font-bold text-[#e1e1fa]">15:21:57</time>
          </div>
        </div>
        <div className="flex h-2 justify-between bg-[#02060c] pr-[5px] pl-3.5">
          <i className="w-[73px] bg-[#323437]" /><i className="w-0.5 bg-[#646464]" />
        </div>
      </footer>
    </div>
  );
}
